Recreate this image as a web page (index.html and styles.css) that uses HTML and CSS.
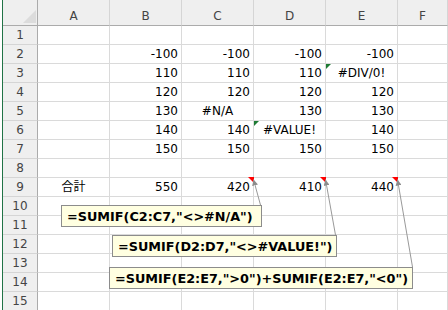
FILE: index.html
```html
<!DOCTYPE html>
<html lang="ja">
<head>
    <meta charset="UTF-8">
    <title>SUMIF エラー除外</title>
    <link rel="stylesheet" href="styles.css">
</head>
<body>
    <div class="sheet">
        <div class="grid">
            <!-- column headers -->
            <div class="hd corner"></div>
            <div class="hd">A</div><div class="hd">B</div><div class="hd">C</div>
            <div class="hd">D</div><div class="hd">E</div><div class="hd">F</div>

            <div class="rh">1</div><div></div><div></div><div></div><div></div><div></div><div></div>

            <div class="rh">2</div><div></div>
            <div class="n">-100</div><div class="n">-100</div><div class="n">-100</div><div class="n">-100</div><div></div>

            <div class="rh">3</div><div></div>
            <div class="n">110</div><div class="n">110</div><div class="n">110</div><div class="ctr warn">#DIV/0!</div><div></div>

            <div class="rh">4</div><div></div>
            <div class="n">120</div><div class="n">120</div><div class="n">120</div><div class="n">120</div><div></div>

            <div class="rh">5</div><div></div>
            <div class="n">130</div><div class="ctr">#N/A</div><div class="n">130</div><div class="n">130</div><div></div>

            <div class="rh">6</div><div></div>
            <div class="n">140</div><div class="n">140</div><div class="ctr warn">#VALUE!</div><div class="n">140</div><div></div>

            <div class="rh">7</div><div></div>
            <div class="n">150</div><div class="n">150</div><div class="n">150</div><div class="n">150</div><div></div>

            <div class="rh">8</div><div></div><div></div><div></div><div></div><div></div><div></div>

            <div class="rh">9</div><div class="ctr">合計</div>
            <div class="n">550</div><div class="n memo">420</div><div class="n memo">410</div><div class="n memo">440</div><div></div>

            <div class="rh">10</div><div></div><div></div><div></div><div></div><div></div><div></div>
            <div class="rh">11</div><div></div><div></div><div></div><div></div><div></div><div></div>
            <div class="rh">12</div><div></div><div></div><div></div><div></div><div></div><div></div>
            <div class="rh">13</div><div></div><div></div><div></div><div></div><div></div><div></div>
            <div class="rh">14</div><div></div><div></div><div></div><div></div><div></div><div></div>
            <div class="rh">15</div><div></div><div></div><div></div><div></div><div></div><div></div>
        </div>

        <!-- comment leader lines -->
        <svg class="leaders" width="448" height="310" viewBox="0 0 448 310">
            <defs>
                <marker id="tip" markerWidth="6" markerHeight="6" refX="6" refY="3" orient="auto" markerUnits="userSpaceOnUse">
                    <path d="M0,0 L6,3 L0,6 z" fill="#8c8c8c"/>
                </marker>
            </defs>
            <line x1="260.5" y1="205" x2="253.5" y2="179.5" stroke="#999" stroke-width="1" marker-end="url(#tip)"/>
            <line x1="335.5" y1="235" x2="325.5" y2="179.5" stroke="#999" stroke-width="1" marker-end="url(#tip)"/>
            <line x1="412.5" y1="267" x2="397.5" y2="179.5" stroke="#999" stroke-width="1" marker-end="url(#tip)"/>
        </svg>

        <div class="note note-c">=SUMIF(C2:C7,"&lt;&gt;#N/A")</div>
        <div class="note note-d">=SUMIF(D2:D7,"&lt;&gt;#VALUE!")</div>
        <div class="note note-e">=SUMIF(E2:E7,"&gt;0")+SUMIF(E2:E7,"&lt;0")</div>
    </div>
</body>
</html>
```

FILE: styles.css
```css
body {
    margin: 0;
    background: #fff;
    font-family: "DejaVu Sans", "Noto Sans CJK JP", sans-serif;
    font-size: 12px;
    color: #000;
}

.sheet {
    position: relative;
    width: 448px;
    height: 310px;
    overflow: hidden;
    padding-left: 2px;
    box-sizing: border-box;
}

.grid {
    display: grid;
    grid-template-columns: 35px repeat(5, 72px) 1fr;
    grid-template-rows: 26px repeat(15, 19px);
    border-left: 1px solid #217346; /* Excel green edge */
}

.grid > div {
    position: relative;
    box-sizing: border-box;
    border-right: 1px solid #dadada;
    border-bottom: 1px solid #dadada;
    line-height: 18px;
    white-space: nowrap;
}

/* Headers */
.grid > .hd {
    background: #efefef;
    color: #444;
    text-align: center;
    padding-top: 7px;
    border-right-color: #d5d5d5;
    border-bottom-color: #ababab;
}

.grid > .corner {
    border-right-color: #ababab;
}

.corner::after {
    content: "";
    position: absolute;
    right: 1px;
    bottom: 2px;
    border-left: 13px solid transparent;
    border-bottom: 13px solid #dcdcdc;
}

.grid > .rh {
    background: #efefef;
    color: #444;
    text-align: center;
    border-right-color: #ababab;
    border-bottom-color: #d5d5d5;
}

/* Cell values */
.n {
    text-align: right;
    padding-right: 3px;
}

.ctr {
    text-align: center;
}

/* Green error indicator */
.warn::before {
    content: "";
    position: absolute;
    left: 0;
    top: 0;
    border-top: 5px solid #1e7b34;
    border-right: 5px solid transparent;
}

/* Red comment indicator */
.memo::after {
    content: "";
    position: absolute;
    right: -1px;
    top: -1px;
    border-top: 6px solid #ff0000;
    border-left: 6px solid transparent;
}

/* Comments */
.leaders {
    position: absolute;
    left: 0;
    top: 0;
    pointer-events: none;
}

.note {
    position: absolute;
    height: 22px;
    box-sizing: border-box;
    background: #ffffe1;
    border: 1px solid #8c8c8c;
    padding: 1px 0 0 5px;
    line-height: 19px;
    font-size: 12.8px;
    font-weight: bold;
    white-space: nowrap;
}

.note-c {
    left: 61px;
    top: 205px;
    width: 201px;
}

.note-d {
    left: 112px;
    top: 235px;
    width: 225px;
}

.note-e {
    left: 109px;
    top: 267px;
    width: 304px;
}
```
